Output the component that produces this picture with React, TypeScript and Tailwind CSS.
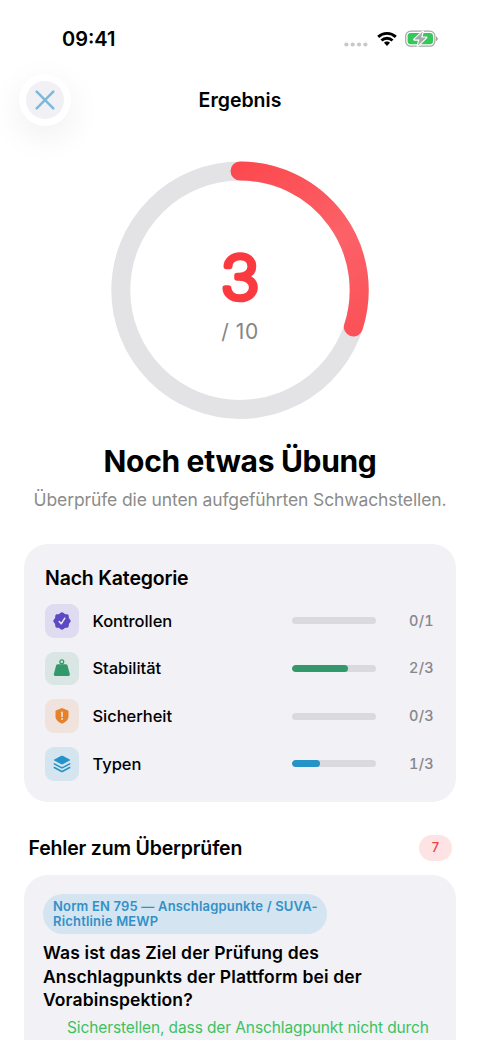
import React from "react";

type Category = { name: string; score: string; ratio: number; color: string; tint: string; icon: React.ReactNode };

const sealPoints = Array.from({ length: 64 }, (_, i) => {
  const a = (i / 64) * Math.PI * 2;
  const r = 8.15 + 0.6 * Math.cos(a * 8);
  return `${(9 + r * Math.sin(a)).toFixed(2)},${(9 - r * Math.cos(a)).toFixed(2)}`;
}).join(" ");

const categories: Category[] = [
  {
    name: "Kontrollen",
    score: "0/1",
    ratio: 0,
    color: "bg-[#5e49c2]",
    tint: "bg-[#dfdbf1]",
    icon: (
      <svg width="18" height="18" viewBox="0 0 18 18" fill="none">
        <polygon points={sealPoints} fill="#5e49c2" />
        <path d="M6.2 9.5 8.2 11.8 11.8 6.2" stroke="#eeeaf8" strokeWidth="1.5" strokeLinecap="round" strokeLinejoin="round" />
      </svg>
    ),
  },
  {
    name: "Stabilität",
    score: "2/3",
    ratio: 2 / 3,
    color: "bg-[#34996a]",
    tint: "bg-[#d9e6e4]",
    icon: (
      <svg width="18" height="20" viewBox="0 0 18 20" fill="none">
        <circle cx="8.8" cy="3.8" r="1.9" stroke="#34996a" strokeWidth="1.3" />
        <path d="M5 6.2h7.6c1.1 0 1.7.5 2 1.5l2.200 8.300c.3 1.200-.4 2-1.500 2H2.400c-1.100 0-1.800-.8-1.500-2L3 7.700c.3-1 .9-1.500 2-1.500Z" fill="#34996a" />
      </svg>
    ),
  },
  {
    name: "Sicherheit",
    score: "0/3",
    ratio: 0,
    color: "bg-[#e6812c]",
    tint: "bg-[#f0e3dd]",
    icon: (
      <svg width="18" height="18" viewBox="0 0 18 18" fill="none">
        <path d="M9 1.100 14.500 3.200c.7.300 1 .7 1 1.400v5.200c0 3-2.200 4.900-6.500 6.900-4.300-2-6.500-3.900-6.500-6.900V4.600c0-.7.300-1.100 1-1.400Z" fill="#e6812c" />
        <path d="M9 5.200v4.300" stroke="#fbe7d5" strokeWidth="1.600" strokeLinecap="round" />
        <circle cx="9" cy="12" r="1" fill="#fbe7d5" />
      </svg>
    ),
  },
  {
    name: "Typen",
    score: "1/3",
    ratio: 1 / 3,
    color: "bg-[#2592c8]",
    tint: "bg-[#d5e5f0]",
    icon: (
      <svg width="18" height="18" viewBox="0 0 18 18" fill="none">
        <path d="M8.300.8q.7-.3 1.400 0l7 3.700q.8.500 0 1l-7 3.800q-.7.300-1.400 0l-7-3.800q-.8-.5 0-1Z" fill="#2592c8" />
        <path d="m1.300 8.900 7 3.700q.7.300 1.400 0l7-3.700M1.300 12.500l7 3.700q.7.300 1.400 0l7-3.700" stroke="#2592c8" strokeWidth="1.600" strokeLinecap="round" />
      </svg>
    ),
  },
];

function StatusBar() {
  return (
    <header className="flex h-[74px] shrink-0 items-center justify-between pr-[42px] pl-[62px] pt-1">
      <span className="text-[20px] leading-6 font-semibold">09:41</span>
      <div className="flex items-center gap-[8.500px]">
        <svg width="24" height="5" viewBox="0 0 24 5" className="mt-2.5" fill="#c8c8c8">
          <circle cx="2.400" cy="2.500" r="2.100" />
          <circle cx="8.700" cy="2.500" r="2.100" />
          <circle cx="15" cy="2.500" r="2.100" />
          <circle cx="21.400" cy="2.500" r="2.100" />
        </svg>
        <svg width="20" height="16" viewBox="0 0 20 16" fill="none" stroke="#000" strokeWidth="2.900">
          <path d="M1.200 5.900a12.800 12.800 0 0 1 17.600 0M4.500 9.500a8 8 0 0 1 11 0" />
          <path d="M10 10.600c1.300 0 2.200.4 3 1.100L10 15l-3-3.300c.8-.7 1.700-1.100 3-1.100Z" fill="#000" stroke="none" />
        </svg>
        <svg width="33" height="18" viewBox="0 0 33 18" fill="none">
          <rect x="0.700" y="1.200" width="29.200" height="15" rx="4.900" stroke="#a6a6a6" strokeWidth="1.200" />
          <rect x="2.600" y="3.100" width="25.400" height="11.200" rx="3.200" fill="#34c759" />
          <path d="M31 6.500c2.300.7 2.300 3.700 0 4.500Z" fill="#a0a0a0" />
          <path d="m17.800 1.600-8.600 8h5.200l-1.700 6.200 8.700-8.300h-5.300Z" fill="#a5aca7" stroke="#fff" strokeWidth="2.200" strokeLinejoin="round" paintOrder="stroke" />
        </svg>
      </div>
    </header>
  );
}

function ScoreRing() {
  return (
    <div className="mx-auto mt-[35px] grid size-[258px] shrink-0 place-items-center">
      <svg width="258" height="258" viewBox="0 0 258 258" className="col-start-1 row-start-1" fill="none">
        <defs>
          <linearGradient id="ring" x1="129" y1="0" x2="245" y2="180" gradientUnits="userSpaceOnUse">
            <stop stopColor="#fc484e" />
            <stop offset=".55" stopColor="#fb6268" />
            <stop offset="1" stopColor="#fb5057" />
          </linearGradient>
        </defs>
        <circle cx="129" cy="129.200" r="119.200" stroke="#e3e3e6" strokeWidth="19" />
        <path d="M129 10A119.200 119.200 0 0 1 242.370 166.030" stroke="url(#ring)" strokeWidth="19" strokeLinecap="round" />
      </svg>
      <div className="col-start-1 row-start-1 flex flex-col items-center">
        <svg width="80" height="80" viewBox="0 0 80 80" className="overflow-visible" aria-label="3">
          <text transform="translate(40 62.800) scale(1.080 1)" textAnchor="middle" fontSize="60" fontWeight="200" fill="#fb3a3f" stroke="#fb3a3f" strokeWidth="5.500" strokeLinejoin="round" strokeLinecap="round">3</text>
        </svg>
        <span className="mt-[2px] -mb-px text-[21px] leading-7 tracking-[0.600px] text-[#858585]">/ 10</span>
      </div>
    </div>
  );
}

function CategoryRow({ item }: { item: Category }) {
  return (
    <li className="flex h-[33.500px] items-center">
      <span className={`grid size-[33.500px] place-items-center rounded-[9px] ${item.tint}`}>{item.icon}</span>
      <span className="ml-3.5 flex-1 text-[16.500px] leading-6 font-medium tracking-[-0.05px]">{item.name}</span>
      <span className="h-[7px] w-[84px] overflow-hidden rounded-full bg-[#dadade]">
        <span className={`block h-full rounded-full ${item.color}`} style={{ width: `${item.ratio * 100}%` }} />
      </span>
      <span className="w-[59.300px] pr-[1px] text-right text-[14.500px] leading-5 font-medium tracking-[0.3px] text-[#86868b] tabular-nums">{item.score}</span>
    </li>
  );
}

export default function App() {
  return (
    <main className="flex h-[1040px] w-[480px] flex-col overflow-hidden bg-white font-[Inter,'Liberation_Sans',sans-serif] text-black">
      <StatusBar />
      <nav className="grid h-[52px] shrink-0 grid-cols-[52px_1fr_52px] items-center pr-[21px] pl-[19px]">
        <button aria-label="Schließen" className="grid size-[52px] place-items-center rounded-full bg-white shadow-[0_10px_35px_rgba(0,0,0,0.07)]">
          <span className="grid size-[38px] place-items-center rounded-full bg-[#f0f0f5]">
            <svg width="20" height="20" viewBox="0 0 20 20" fill="none" stroke="#7bb9da" strokeWidth="2.500" strokeLinecap="round">
              <path d="m1.700 1.700 16.600 16.600m0-16.600L1.700 18.300" />
            </svg>
          </span>
        </button>
        <h1 className="pl-[2px] text-center text-[19.500px] leading-6 font-semibold">Ergebnis</h1>
      </nav>
      <ScoreRing />
      <h2 className="mt-[22px] shrink-0 text-center text-[30px] leading-10 font-bold tracking-[-0.320px] whitespace-nowrap">Noch etwas Übung</h2>
      <p className="mt-[7px] shrink-0 text-center text-[17.500px] leading-6 tracking-[-0.120px] whitespace-nowrap text-[#8b8b8b]">Überprüfe die unten aufgeführten Schwachstellen.</p>
      <section className="mx-6 mt-8 h-[258px] shrink-0 rounded-[24px] bg-[#f1f1f6] px-[21px] pt-[22px]">
        <h3 className="text-[19.500px] leading-6 font-semibold tracking-[-0.180px]">Nach Kategorie</h3>
        <ul className="mt-[14px] flex flex-col gap-[14.200px]">
          {categories.map((item) => <CategoryRow key={item.name} item={item} />)}
        </ul>
      </section>
      <div className="mr-7 ml-[28.500px] mt-[33px] flex h-[26px] shrink-0 items-center justify-between">
        <h3 className="text-[19.500px] leading-6 font-semibold tracking-[-0.180px]">Fehler zum Überprüfen</h3>
        <span className="grid h-[26px] w-[33px] place-items-center rounded-full bg-[#fee3e4] text-[13px] font-medium text-[#eb4545]">7</span>
      </div>
      <section className="mx-6 mt-[14px] h-[220px] shrink-0 rounded-t-[24px] bg-[#f1f1f6] px-[19px] pt-[19px]">
        <div className="flex h-10 w-[284px] items-center rounded-full bg-[#d4e4f0] pl-[10px]">
          <p className="text-[13px] leading-[15.500px] font-semibold tracking-[0.180px] whitespace-nowrap text-[#3291c8]">Norm EN 795 — Anschlagpunkte / SUVA-<br />Richtlinie MEWP</p>
        </div>
        <h4 className="mt-[7px] text-[17.500px] leading-[23.700px] font-semibold tracking-[0.120px] whitespace-nowrap">Was ist das Ziel der Prüfung des<br />Anschlagpunkts der Plattform bei der<br />Vorabinspektion?</h4>
        <p className="mt-[5.500px] pl-6 text-[15.500px] leading-[20px] tracking-[-0.110px] whitespace-nowrap text-[#40c15f]">Sicherstellen, dass der Anschlagpunkt nicht durch<br />die Last oder äußere Einflüsse überlastet</p>
      </section>
    </main>
  );
}
